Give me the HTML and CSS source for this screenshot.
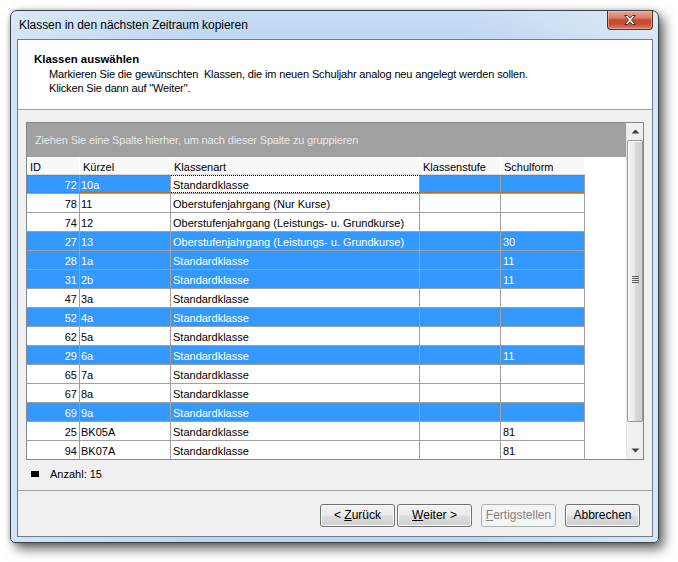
FILE: index.html
```html
<!DOCTYPE html>
<html lang="de">
<head>
<meta charset="utf-8">
<title>Klassen in den nächsten Zeitraum kopieren</title>
<link rel="stylesheet" href="styles.css">
</head>
<body>
<div class="window">
  <div class="titlebar">
    <span class="title">Klassen in den nächsten Zeitraum kopieren</span>
    <div class="close">
      <svg width="14" height="10" viewBox="0 0 14 10"><path d="M1.5 0.5h3l2.5 2.6 2.5-2.6h3l-4 4.5 4 4.5h-3l-2.5-2.6-2.5 2.6h-3l4-4.5z" fill="#fff" stroke="#5a2c26" stroke-width="1" stroke-linejoin="round"/></svg>
    </div>
  </div>
  <div class="client">
    <div class="header">
      <div class="h-title">Klassen auswählen</div>
      <div class="h-desc">Markieren Sie die gewünschten&nbsp; Klassen, die im neuen Schuljahr analog neu angelegt werden sollen.<br>Klicken Sie dann auf "Weiter".</div>
    </div>
    <div class="body">
      <div class="grid">
        <div class="grid-main">
          <div class="group-panel">Ziehen Sie eine Spalte hierher, um nach dieser Spalte zu gruppieren</div>
          <div class="row head">
            <div class="c">ID</div><div class="c">Kürzel</div><div class="c">Klassenart</div><div class="c">Klassenstufe</div><div class="c">Schulform</div>
          </div>
          <div class="row sel focus">
            <div class="c num">72</div><div class="c">10a</div><div class="c fc">Standardklasse</div><div class="c"></div><div class="c"></div>
          </div>
          <div class="row">
            <div class="c num">78</div><div class="c">11</div><div class="c">Oberstufenjahrgang (Nur Kurse)</div><div class="c"></div><div class="c"></div>
          </div>
          <div class="row">
            <div class="c num">74</div><div class="c">12</div><div class="c">Oberstufenjahrgang (Leistungs- u. Grundkurse)</div><div class="c"></div><div class="c"></div>
          </div>
          <div class="row sel">
            <div class="c num">27</div><div class="c">13</div><div class="c">Oberstufenjahrgang (Leistungs- u. Grundkurse)</div><div class="c"></div><div class="c">30</div>
          </div>
          <div class="row sel">
            <div class="c num">28</div><div class="c">1a</div><div class="c">Standardklasse</div><div class="c"></div><div class="c">11</div>
          </div>
          <div class="row sel">
            <div class="c num">31</div><div class="c">2b</div><div class="c">Standardklasse</div><div class="c"></div><div class="c">11</div>
          </div>
          <div class="row">
            <div class="c num">47</div><div class="c">3a</div><div class="c">Standardklasse</div><div class="c"></div><div class="c"></div>
          </div>
          <div class="row sel">
            <div class="c num">52</div><div class="c">4a</div><div class="c">Standardklasse</div><div class="c"></div><div class="c"></div>
          </div>
          <div class="row">
            <div class="c num">62</div><div class="c">5a</div><div class="c">Standardklasse</div><div class="c"></div><div class="c"></div>
          </div>
          <div class="row sel">
            <div class="c num">29</div><div class="c">6a</div><div class="c">Standardklasse</div><div class="c"></div><div class="c">11</div>
          </div>
          <div class="row">
            <div class="c num">65</div><div class="c">7a</div><div class="c">Standardklasse</div><div class="c"></div><div class="c"></div>
          </div>
          <div class="row">
            <div class="c num">67</div><div class="c">8a</div><div class="c">Standardklasse</div><div class="c"></div><div class="c"></div>
          </div>
          <div class="row sel">
            <div class="c num">69</div><div class="c">9a</div><div class="c">Standardklasse</div><div class="c"></div><div class="c"></div>
          </div>
          <div class="row">
            <div class="c num">25</div><div class="c">BK05A</div><div class="c">Standardklasse</div><div class="c"></div><div class="c">81</div>
          </div>
          <div class="row last">
            <div class="c num">94</div><div class="c">BK07A</div><div class="c">Standardklasse</div><div class="c"></div><div class="c">81</div>
          </div>
        </div>
        <div class="vscroll">
          <div class="arrow">
            <svg width="9" height="5" viewBox="0 0 9 5"><path d="M4.5 0.5L8.5 4.5H0.5z" fill="#404040"/></svg>
          </div>
          <div class="track">
            <div class="thumb">
              <div class="grip"><i></i><i></i><i></i><i></i></div>
            </div>
          </div>
          <div class="arrow">
            <svg width="9" height="5" viewBox="0 0 9 5"><path d="M0.5 0.5H8.5L4.5 4.5z" fill="#404040"/></svg>
          </div>
        </div>
      </div>
      <div class="count"><span class="sq"></span><span>Anzahl: 15</span></div>
    </div>
    <div class="footer">
      <div class="btn">&lt; <u>Z</u>urück</div>
      <div class="btn next"><u>W</u>eiter &gt;</div>
      <div class="btn dis"><u>F</u>ertigstellen</div>
      <div class="btn"><span>Abbrechen</span></div>
    </div>
  </div>
</div>
</body>
</html>
```

FILE: styles.css
```css
* {
  box-sizing: border-box;
}

html, body {
  margin: 0;
  padding: 0;
}

body {
  width: 678px;
  height: 562px;
  overflow: hidden;
  background: #ffffff;
  font-family: "Liberation Sans", Arial, sans-serif;
  color: #000;
}

.window {
  margin: 10px 0 0 10px;
  width: 649px;
  height: 533px;
  border: 1px solid #3d4248;
  border-radius: 7px 7px 5px 5px;
  padding: 0 5px 5px 6px;
  display: flex;
  flex-direction: column;
  background:
    linear-gradient(to right, rgba(255,255,255,0.35), rgba(255,255,255,0) 30%, rgba(255,255,255,0) 70%, rgba(255,255,255,0.4)),
    linear-gradient(to bottom, #c7dcf3 0, #b9d4f1 40px, #bcd6f1 100%);
  box-shadow: 5px 6px 12px rgba(0, 0, 0, 0.6), 0 0 4px rgba(0, 0, 0, 0.25);
}

.titlebar {
  height: 28px;
  display: flex;
  align-items: flex-start;
  flex: none;
}

.title {
  font-size: 12px;
  line-height: 28px;
  margin-left: 2px;
  color: #000;
  letter-spacing: -0.05px;
}

.close {
  margin-left: auto;
  width: 46px;
  height: 19px;
  border: 1px solid #5b2a22;
  border-top: none;
  border-radius: 0 0 4px 4px;
  display: flex;
  align-items: center;
  justify-content: center;
  background: linear-gradient(to bottom, #e7a897 0%, #d9826f 35%, #c8492f 52%, #c74a31 70%, #d8806b 100%);
  box-shadow: inset 0 0 0 1px rgba(255, 210, 200, 0.45);
}

.close svg {
  display: block;
}

.client {
  flex: 1;
  border: 1px solid #6f7e8e;
  background: #f0f0f0;
  display: flex;
  flex-direction: column;
}

.header {
  flex: none;
  height: 70px;
  background: #ffffff;
  border-bottom: 1px solid #a0a0a0;
  padding: 12px 16px 0 16px;
  font-size: 11px;
  line-height: 15px;
}

.h-title {
  font-weight: bold;
  font-size: 11.4px;
}

.h-desc {
  padding-left: 15px;
  letter-spacing: -0.15px;
  line-height: 14px;
}

.body {
  flex: 1;
  padding: 12px 8px 0 8px;
  display: flex;
  flex-direction: column;
}

.grid {
  width: 618px;
  height: 338px;
  border: 1px solid #828790;
  display: flex;
  background: #ffffff;
}

.grid-main {
  flex: 1;
  display: flex;
  flex-direction: column;
  font-size: 11px;
}

.group-panel {
  height: 34px;
  background: #a0a0a0;
  color: #e8e8e8;
  line-height: 35px;
  padding-left: 8px;
  letter-spacing: -0.15px;
}

.row {
  display: grid;
  grid-template-columns: 53px 91px 249px 81px 84px;
  width: 558px;
  height: 19px;
  border-bottom: 1px solid #a0a0a0;
}

.row.last {
  border-bottom: none;
  height: 18px;
}

.c {
  border-right: 1px solid #a0a0a0;
  line-height: 18px;
  padding: 1px 2px 0 2px;
  white-space: nowrap;
  overflow: hidden;
}

.c:nth-child(2) {
  padding-left: 1px;
}

.num {
  text-align: right;
}

.row.head {
  height: 18px;
  border-bottom: 1px solid #d8d8d8;
  background: #f8f8f8;
}

.row.head .c {
  border-right: 1px solid #ffffff;
  line-height: 17px;
  padding: 2px 0 0 3px;
}

.row.sel .c {
  background: #3399ff;
  color: #ffffff;
}

.row.focus .c {
  border-top: 1px dotted #b8661e;
  border-bottom: 1px dotted #b8661e;
  line-height: 16px;
}

.row.focus .c:first-child {
  border-left: 1px dotted #b8661e;
}

.row.focus .c.fc {
  background: #ffffff;
  color: #000;
  border-top: 1px dotted #000;
  border-bottom: 1px dotted #000;
}

.vscroll {
  width: 17px;
  flex: none;
  display: flex;
  flex-direction: column;
  background: #f0f0f0;
  border-left: 1px solid #e6e6e6;
}

.arrow {
  height: 17px;
  flex: none;
  display: flex;
  align-items: center;
  justify-content: center;
}

.arrow svg {
  display: block;
}

.track {
  flex: 1;
  display: flex;
  flex-direction: column;
  padding: 0 0 20px 0;
}

.thumb {
  flex: 1;
  border: 1px solid #989898;
  border-radius: 2px;
  background: linear-gradient(to right, #f3f3f3 0%, #eaeaea 45%, #d9d9d9 55%, #cfcfcf 100%);
  box-shadow: inset 1px 1px 0 #fdfdfd;
  display: flex;
  flex-direction: column;
  align-items: center;
  padding-top: 135px;
}

.grip {
  display: flex;
  flex-direction: column;
  gap: 1px;
}

.grip i {
  display: block;
  width: 7px;
  height: 1px;
  background: #606060;
}

.count {
  display: flex;
  align-items: center;
  height: 15px;
  margin-top: 6px;
  font-size: 11px;
}

.sq {
  width: 8px;
  height: 6px;
  background: #000;
  margin-left: 5px;
  margin-right: 11px;
}

.footer {
  flex: none;
  height: 46px;
  border-top: 1px solid #a0a0a0;
  display: flex;
  justify-content: flex-end;
  align-items: flex-start;
  padding: 13px 12px 0 0;
}

.btn {
  width: 75px;
  height: 23px;
  margin-left: 9px;
  border: 1px solid #707070;
  border-radius: 3px;
  font-size: 12px;
  line-height: 20px;
  text-align: center;
  color: #000;
  background: linear-gradient(to bottom, #f2f2f2 0%, #ebebeb 48%, #dddddd 52%, #cfcfcf 100%);
  box-shadow: inset 0 0 0 1px #fcfcfc;
}

.btn.next {
  margin-left: 2px;
}

.btn.dis {
  border-color: #adb2b5;
  background: #f4f4f4;
  color: #838383;
  box-shadow: none;
}
```
